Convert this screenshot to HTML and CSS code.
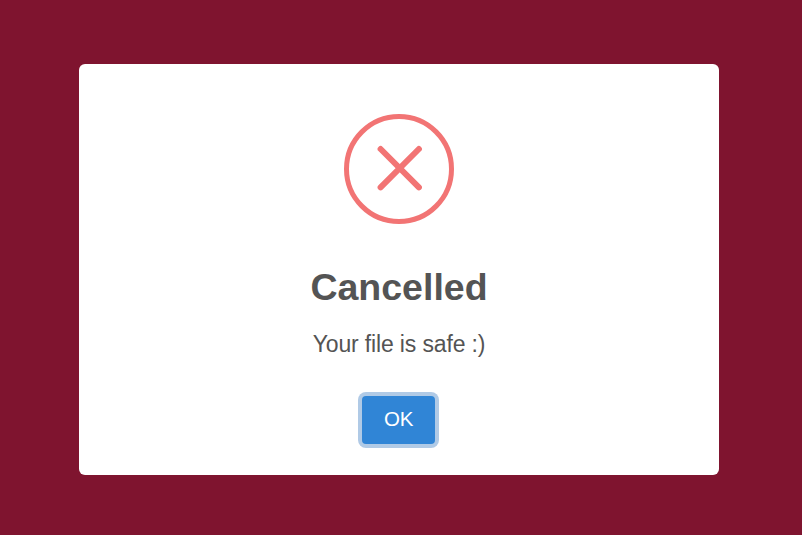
FILE: index.html
```html
<!DOCTYPE html>
<html lang="en">
<head>
<meta charset="utf-8">
<title>Cancelled</title>
<link rel="stylesheet" href="styles.css">
</head>
<body>
<main class="modal" role="dialog">
<svg class="icon" viewBox="0 0 110 110" aria-hidden="true">
<circle cx="55" cy="55" r="52.5"/>
<path d="M36.6 35 74.9 73.3M74.9 35 36.6 73.3"/>
</svg>
<h1 class="title">Cancelled</h1>
<p class="message">Your file is safe :)</p>
<button class="confirm" type="button">OK</button>
</main>
</body>
</html>
```
FILE: styles.css
```css
* { box-sizing: border-box; }
body {
  margin: 0;
  height: 535px;
  padding: 64px 83px 60px 79px;
  background: #7f142f;
  font-family: "Liberation Sans", Arial, sans-serif;
  overflow: hidden;
}
.modal {
  width: 640px;
  height: 411px;
  padding-top: 50px;
  display: flex;
  flex-direction: column;
  align-items: center;
  background: #fff;
  border-radius: 6px;
}
.icon {
  width: 110px;
  height: 110px;
  flex: none;
  fill: none;
  stroke: #f27474;
  stroke-width: 5;
}
.icon path { stroke-width: 6; stroke-linecap: round; }
.title {
  margin: 41px 0 0;
  font-size: 37.5px;
  line-height: 44px;
  font-weight: 700;
  color: #545454;
}
.message {
  margin: 21px 0 0;
  font-size: 23px;
  letter-spacing: -0.15px;
  line-height: 28px;
  color: #545454;
}
.confirm {
  margin: 38px 1px 0 0;
  width: 73px;
  height: 48px;
  padding: 0;
  border: 0;
  border-radius: 4px;
  background: #3085d6;
  color: #fff;
  font: 20.5px/46px "Liberation Sans", Arial, sans-serif;
  letter-spacing: -0.3px;
  padding-bottom: 2px;
  box-shadow: 0 0 0 4px #b0cae6;
}
```
